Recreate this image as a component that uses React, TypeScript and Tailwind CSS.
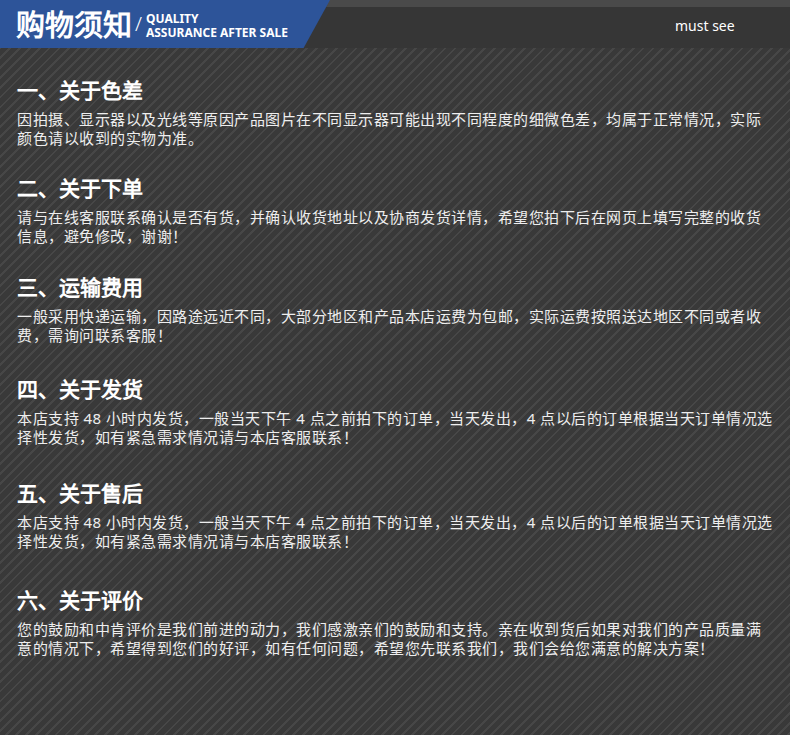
const sections = [
  { t: "一、关于色差", b: "因拍摄、显示器以及光线等原因产品图片在不同显示器可能出现不同程度的细微色差，均属于正常情况，实际颜色请以收到的实物为准。", mt: "mt-[28px]" },
  { t: "二、关于下单", b: "请与在线客服联系确认是否有货，并确认收货地址以及协商发货详情，希望您拍下后在网页上填写完整的收货信息，避免修改，谢谢！", mt: "mt-[26px]" },
  { t: "三、运输费用", b: "一般采用快递运输，因路途远近不同，大部分地区和产品本店运费为包邮，实际运费按照送达地区不同或者收费，需询问联系客服！", mt: "mt-[27px]" },
  { t: "四、关于发货", b: "本店支持 48 小时内发货，一般当天下午 4 点之前拍下的订单，当天发出，4 点以后的订单根据当天订单情况选择性发货，如有紧急需求情况请与本店客服联系！", mt: "mt-[30px]" },
  { t: "五、关于售后", b: "本店支持 48 小时内发货，一般当天下午 4 点之前拍下的订单，当天发出，4 点以后的订单根据当天订单情况选择性发货，如有紧急需求情况请与本店客服联系！", mt: "mt-[32px]" },
  { t: "六、关于评价", b: "您的鼓励和中肯评价是我们前进的动力，我们感激亲们的鼓励和支持。亲在收到货后如果对我们的产品质量满意的情况下，希望得到您们的好评，如有任何问题，希望您先联系我们，我们会给您满意的解决方案！", mt: "mt-[35px]" },
];

export default function App() {
  return (
    <div lang="zh-CN" className="w-[790px] h-[735px] overflow-hidden bg-[#393939] bg-[repeating-linear-gradient(135deg,#393939_0px,#393939_5px,#474747_5px,#474747_7px)] font-['Noto_Sans_CJK_SC',sans-serif] text-white">
      <div className="relative h-[48px] bg-[#363636]">
        <div className="absolute left-0 right-0 top-0 h-[7px] bg-[#4a4a4a]" />
        <div className="absolute left-0 top-0 h-[48px] w-[330px] bg-[#2d5499] [clip-path:polygon(0_0,100%_0,92%_100%,0_100%)]" />
        <div className="relative flex items-center h-[48px] pl-[16px]">
          <span className="text-[29px] font-bold leading-none">购物须知</span>
          <span className="ml-[3px] text-[20px] font-light leading-none">/</span>
          <div className="ml-[4px] text-[12px] font-bold leading-[14px] font-['Open_Sans',sans-serif] mt-[4px]">
            <div>QUALITY</div>
            <div>ASSURANCE AFTER SALE</div>
          </div>
          <span className="absolute left-[675px] top-[19px] text-[14px] leading-none font-['Open_Sans',sans-serif]">must see</span>
        </div>
      </div>
      <div className="px-[17px]">
        {sections.map((s) => (
          <div key={s.t} className={s.mt}>
            <div className="text-[21px] font-bold leading-[28px]">{s.t}</div>
            <div className="mt-[6px] text-[15px] tracking-[0.5px] leading-[19px] text-[#eeeeee]">{s.b}</div>
          </div>
        ))}
      </div>
    </div>
  );
}
